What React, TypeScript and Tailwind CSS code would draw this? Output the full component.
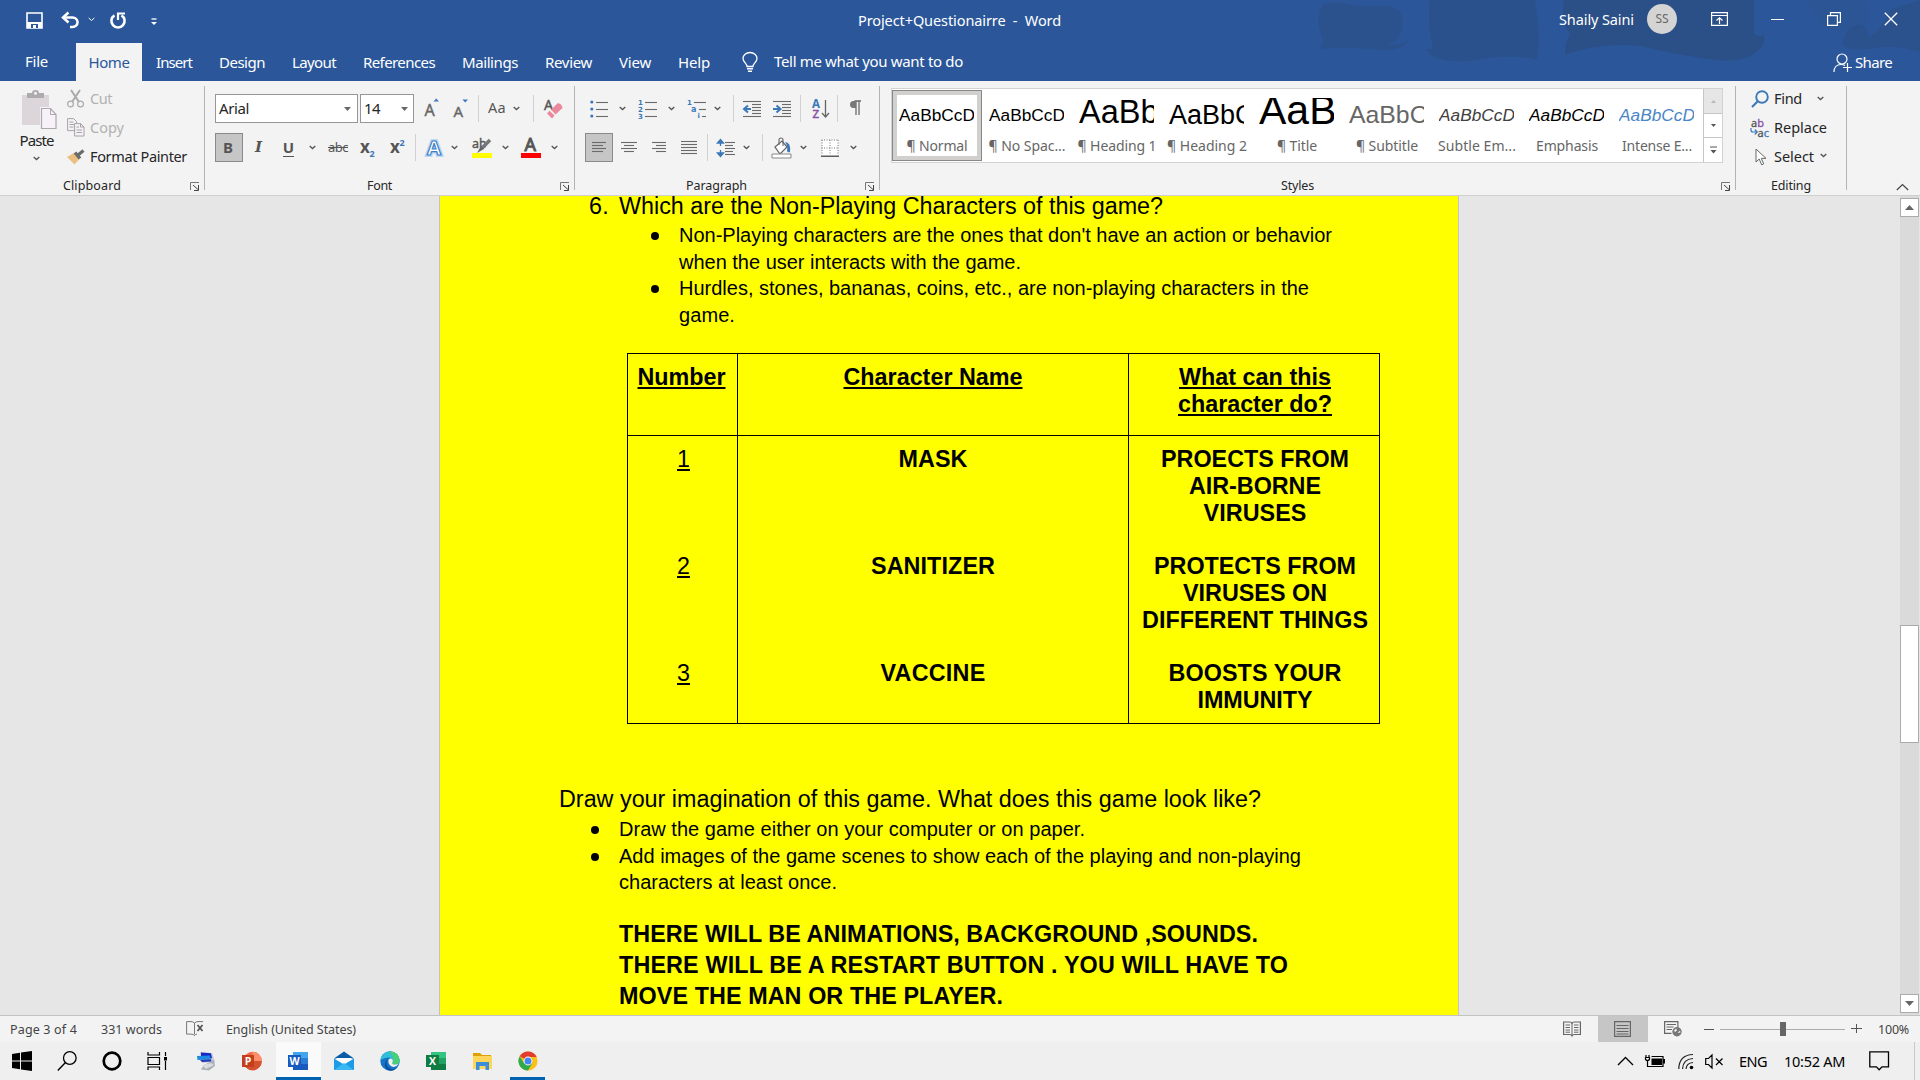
import React, { useLayoutEffect, useRef, useState } from 'react';

/* Single line of text whose tracking is adjusted so that it fills a given width. */
function T({ w, c = '', children }: { w: number; c?: string; children: string }) {
  const ref = useRef<HTMLSpanElement>(null);
  const [ls, setLs] = useState(0);
  useLayoutEffect(() => {
    if (ref.current) {
      const natural = ref.current.getBoundingClientRect().width;
      setLs((w - natural) / children.length);
    }
  }, [w, children]);
  return (
    <span className={'block shrink-0 whitespace-pre ' + c} style={{ width: w }}>
      <span ref={ref} style={{ letterSpacing: ls }}>
        {children}
      </span>
    </span>
  );
}

type SvgProps = { w: number; h: number; c?: string; children: React.ReactNode };
const S = ({ w, h, c = '', children }: SvgProps) => (
  <svg width={w} height={h} viewBox={`0 0 ${w} ${h}`} className={'block shrink-0 overflow-visible ' + c} fill="none">
    {children}
  </svg>
);

const Chev = ({ c = '' }: { c?: string }) => (
  <S w={7} h={5} c={c}>
    <path d="M.7 1l2.8 2.6L6.300 1" stroke="#555" strokeWidth="1.3" />
  </S>
);
const Tri = ({ c = '' }: { c?: string }) => (
  <S w={7} h={4} c={c}>
    <path d="M0 0h7L3.500 4z" fill="#666" />
  </S>
);
const Sep = ({ c = '' }: { c?: string }) => <div className={'h-[27px] w-px shrink-0 bg-[#d0d0d0] ' + c} />;
const GroupSep = () => <div className="mt-[5px] h-[104px] w-px shrink-0 bg-[#b3b3b3]" />;
const Launcher = ({ c = '' }: { c?: string }) => (
  <S w={10} h={9} c={c}>
    <path d="M.5 8V.5H9" stroke="#777" />
    <path d="M3 3l5 4.500M8.500 3v5.500H4" stroke="#444" />
  </S>
);

function TitleBar() {
  return (
    <div className="flex h-[43px] items-center text-[14.5px] text-white">
      <S w={17} h={17} c="ml-[26px] -mt-[3px]">
        <path d="M1 1h15v15H1z" stroke="#fff" strokeWidth="1.6" />
        <path d="M1 10h15v6H1z" fill="#fff" />
        <path d="M5 12h7v4h-2v-3H7v3H5z" fill="#2b579a" />
      </S>
      <S w={19} h={16} c="ml-[18px] -mt-[3px]">
        <path d="M2 5.500h9.500a5 4.700 0 010 9.500H9" stroke="#fff" strokeWidth="2.500" />
        <path d="M7.500.5L2 5.500l5.500 5" stroke="#fff" strokeWidth="2.500" />
      </S>
      <S w={7} h={5} c="ml-[8px] -mt-[4px]">
        <path d="M.7 1l2.800 2.500L6.300 1" stroke="#fff" />
      </S>
      <S w={18} h={17} c="ml-[14px] -mt-[3px]">
        <path d="M5.500 3.300A6.600 6.600 0 1012.500 3.300" stroke="#fff" strokeWidth="2.600" />
        <path d="M9 8V1.500h7" stroke="#fff" strokeWidth="2.200" />
      </S>
      <S w={6} h={8} c="ml-[24px]">
        <path d="M.5 1h5" stroke="#fff" strokeWidth="1.300" />
        <path d="M0 4h6L3 7z" fill="#fff" />
      </S>
      <T w={203} c="ml-[701px] -mt-[2px]">{'Project+Questionairre  -  Word'}</T>
      <T w={75} c="ml-[498px] -mt-[4px]">Shaily Saini</T>
      <div className="-mt-[5px] ml-[13px] flex size-[30px] items-center justify-center rounded-full bg-[#d4d4d4] text-[12px] text-[#666]">
        SS
      </div>
      <S w={17} h={14} c="ml-[34px] -mt-[5px]">
        <path d="M.6.6h15.800v12.800H.6zM.6 3.500h15.800" stroke="#fff" strokeWidth="1.200" />
        <path d="M8.500 12V6M5.500 8.500l3-2.700 3 2.700" stroke="#fff" strokeWidth="1.200" />
      </S>
      <div className="-mt-[4px] ml-[43px] h-px w-[13px] bg-white" />
      <S w={14} h={14} c="ml-[43px] -mt-[5px]">
        <path d="M.6 3.600h9.800v9.800H.6zM3.500 3.500V.6h9.900v9.800h-3" stroke="#fff" strokeWidth="1.200" />
      </S>
      <S w={14} h={14} c="ml-[43px] -mt-[5px]">
        <path d="M.8.800l12.400 12.400M13.200.8L.8 13.200" stroke="#fff" strokeWidth="1.300" />
      </S>
    </div>
  );
}

function TabBar() {
  return (
    <div className="flex h-[38px] items-center text-[15px] text-white">
      <T w={23} c="ml-[25px] -mt-[1px]">File</T>
      <div className="ml-[28px] flex h-full w-[66px] items-center justify-center bg-[#f3f3f3] text-[#2b579a]">
        <T w={41}>Home</T>
      </div>
      <T w={36} c="ml-[14px]">Insert</T>
      <T w={46} c="ml-[27px]">Design</T>
      <T w={44} c="ml-[27px]">Layout</T>
      <T w={72} c="ml-[27px]">References</T>
      <T w={56} c="ml-[27px]">Mailings</T>
      <T w={47} c="ml-[27px]">Review</T>
      <T w={32} c="ml-[27px]">View</T>
      <T w={32} c="ml-[27px]">Help</T>
      <S w={16} h={20} c="ml-[32px]">
        <path d="M5 14.500c0-3-4-4.300-4-8A7 6 0 0115 6.500c0 3.700-4 5-4 8z" stroke="#fff" strokeWidth="1.300" />
        <path d="M5 16.800h6M6 19.200h4" stroke="#fff" strokeWidth="1.400" />
      </S>
      <T w={189} c="ml-[16px] -mt-[1px]">Tell me what you want to do</T>
      <S w={19} h={20} c="ml-[870px] mt-[2px]">
        <circle cx="9" cy="6" r="5" stroke="#fff" strokeWidth="1.200" />
        <path d="M1 19c0-5 3-7.500 7-7.500 2 0 3 .3 4 1M14.500 10v9M10 14.500h9" stroke="#fff" strokeWidth="1.200" />
      </S>
      <T w={37} c="ml-[3px] mt-[1px]">Share</T>
    </div>
  );
}

function Header() {
  return (
    <header className="relative h-[81px] bg-[#2b579a]">
      <svg className="absolute right-0 top-0 h-[81px] w-[640px]" viewBox="0 0 640 81" fill="#2b4f85">
        <path d="M44 4q14-4 32 2h32q18 3 14 22-2 14-16 16 14 2 22-4-2 10-26 10-38-4-62-1 4-8 2-12-8-20 2-33z" opacity=".6" />
        <path d="M150 0h105q6 30 2 60-18-6-50-2-48 10-62-9l8 0q-6-26-3-49z" opacity=".75" />
        <path d="M284 0h190v34q12 6 9-4 4 10-2 18-14 15-44 12-46-6-76-14-40-4-76 9 0-14 5-20-10-16-6-35z" opacity=".9" />
        <path d="M528 0h58l4 20q-10 12-24 10-28 4-38-30z" opacity=".25" />
        <path d="M563 44q0-14 14-19 10-2 12 12 12-6 22-28l29-9v52q-30-8-42-4-34 4-35-4z" opacity=".6" />
      </svg>
      <div className="relative">
        <TitleBar />
        <TabBar />
      </div>
    </header>
  );
}

function Clipboard() {
  return (
    <div className="flex w-[204px] shrink-0 flex-col">
      <div className="flex h-[96px]">
        <div className="flex w-[56px] flex-col items-center pl-[17px]">
          <S w={35} h={39} c="ml-[5px] mt-[9px]">
            <path d="M0 5h27v30H0z" fill="#dcd6da" />
            <path d="M5 3h5a3.500 3 0 017 0h5v5H5z" fill="#aeabae" />
            <circle cx="13.500" cy="3.300" r="1.500" fill="#f3f3f3" />
            <path d="M18 17h17v22H18z" fill="#f3f3f3" />
            <path d="M19.500 18.500h9l5.500 6v14H19.500z" fill="#f6f2f8" stroke="#aea6b0" strokeWidth="1.200" />
            <path d="M28.500 18.500v6H34" stroke="#aea6b0" />
          </S>
          <T w={34} c="text-[15px] leading-[22px] text-[#262626]">Paste</T>
          <Chev c="mt-[5px]" />
        </div>
        <div className="ml-[11px] flex flex-col pt-[3px] text-[14.5px] text-[#b1b1b1]">
          <div className="flex h-[29px] items-center">
            <S w={17} h={19}>
              <path d="M4 1l8 12M13 1L5 13" stroke="#aaa" strokeWidth="2" />
              <circle cx="3.500" cy="15" r="2.900" stroke="#aaa" strokeWidth="1.200" />
              <circle cx="13.500" cy="15" r="2.900" stroke="#aaa" strokeWidth="1.200" />
            </S>
            <T w={22} c="ml-[6px]">Cut</T>
          </div>
          <div className="flex h-[29px] items-center">
            <S w={18} h={19}>
              <path d="M.6.6h6l3 3v9H.6z" stroke="#aaa0aa" />
              <path d="M2.500 4h4M2.500 6.500h5M2.500 9h4" stroke="#aaa0aa" />
              <path d="M7.600 5.600h6l3.400 3.400v9H7.600z" fill="#f3f3f3" stroke="#aaa0aa" />
              <path d="M13.500 5.600V9H17M9.500 9h2.500M9.500 12h5.500M9.500 14.500h5.500" stroke="#aaa0aa" />
            </S>
            <T w={34} c="ml-[5px]">Copy</T>
          </div>
          <div className="flex h-[29px] items-center text-[#262626]">
            <S w={18} h={16}>
              <path d="M0 8l7-4 5.500 6L7.500 15.500z" fill="#eabf7f" />
              <path d="M8 3.500l5 6" stroke="#6b6b6b" strokeWidth="3.500" />
              <path d="M11 6l5.500-4.500" stroke="#6b6b6b" strokeWidth="3.200" />
            </S>
            <T w={97} c="ml-[5px]">Format Painter</T>
          </div>
        </div>
      </div>
      <div className="mt-px flex h-[17px] items-center text-[12.500px] text-[#262626]">
        <T w={58} c="ml-[63px]">Clipboard</T>
        <Launcher c="ml-[69px] -mt-px" />
      </div>
    </div>
  );
}

function FontGroup() {
  return (
    <div className="flex w-[369px] shrink-0 flex-col pt-[13px]">
      <div className="flex h-[29px] items-center">
        <div className="ml-[10px] flex h-[29px] w-[143px] items-center border border-[#969696] bg-white pl-[3px] text-[15px] text-[#262626]">
          <T w={30}>Arial</T>
          <Tri c="ml-[95px]" />
        </div>
        <div className="ml-[2px] flex h-[29px] w-[54px] items-center border border-[#969696] bg-white pl-[3px] text-[15px] text-[#262626]">
          <T w={16}>14</T>
          <Tri c="ml-[21px]" />
        </div>
        <S w={15} h={18} c="ml-[11px] -mt-[4px]">
          <text x="-.5" y="17.500" fontSize="16" fontFamily="Noto Sans" fill="#666" stroke="#666" strokeWidth=".4">A</text>
          <path d="M8.500 3.500h5.500L11.200.5z" fill="#3b78b8" />
        </S>
        <S w={15} h={18} c="ml-[14px] -mt-[2px]">
          <text x="-.5" y="17.500" fontSize="15" fontFamily="Noto Sans" fill="#666" stroke="#666" strokeWidth=".4">A</text>
          <path d="M8.500.5h5.500l-2.800 3z" fill="#3b78b8" />
        </S>
        <Sep c="ml-[9px]" />
        <T w={18} c="ml-[9px] -mt-[2px] text-[14.5px] text-[#555]">Aa</T>
        <Chev c="ml-[7px]" />
        <Sep c="ml-[13px]" />
        <S w={19} h={20} c="ml-[10px]">
          <text x="0" y="11" fontSize="14" fontFamily="Noto Sans" fill="#555" stroke="#555" strokeWidth=".4">A</text>
          <path d="M7 10.500l7-6.500q4 1 4.500 5l-7 6.500z" fill="#e9899b" />
          <path d="M5.500 11.800l5 4.800-2.500 2.900-5-5z" fill="#e9899b" />
        </S>
      </div>
      <div className="mt-[10px] flex h-[29px] items-center">
        <div className="ml-[10px] flex h-[29px] w-[28px] items-center justify-center border border-[#8a8a8a] bg-[#c6c6c6] pr-[2px] text-[15px] font-bold text-[#555]">
          B
        </div>
        <div className="ml-[12px] w-[11px] font-['DejaVu_Serif','Liberation_Serif',serif] text-[15px] font-bold italic leading-none text-[#555]">I</div>
        <div className="ml-[17px] flex h-[18px] w-[11px] justify-center border-b border-[#555] text-[15px] font-bold leading-[17px] text-[#555]">U</div>
        <Chev c="ml-[15px]" />
        <T w={20} c="ml-[12px] text-[13px] text-[#555] line-through">abc</T>
        <S w={18} h={20} c="ml-[12px]">
          <text x="0" y="14.500" fontSize="17" fontWeight="700" fontFamily="Noto Sans" fill="#555">x</text>
          <text x="9.500" y="18.500" fontSize="9" fontWeight="700" fontFamily="Noto Sans" fill="#3b78b8">2</text>
        </S>
        <S w={18} h={20} c="ml-[12px]">
          <text x="0" y="15" fontSize="17" fontWeight="700" fontFamily="Noto Sans" fill="#555">x</text>
          <text x="9.500" y="8" fontSize="9" fontWeight="700" fontFamily="Noto Sans" fill="#3b78b8">2</text>
        </S>
        <Sep c="ml-[7px]" />
        <S w={20} h={22} c="ml-[8px]">
          <text x="3" y="18" fontSize="20" fontWeight="700" fontFamily="Noto Sans" fill="none" stroke="#bcd8f5" strokeWidth="4" textLength="14" lengthAdjust="spacingAndGlyphs">A</text>
          <text x="3" y="18" fontSize="20" fontWeight="700" fontFamily="Noto Sans" fill="#fff" stroke="#3f7fc6" strokeWidth="1.200" textLength="14" lengthAdjust="spacingAndGlyphs">A</text>
        </S>
        <Chev c="ml-[7px]" />
        <S w={20} h={22} c="ml-[14px]">
          <text x="0" y="11" fontSize="12.500" fontFamily="Noto Sans" fill="#555" stroke="#555" strokeWidth=".4">ab</text>
          <path d="M18 3l-8 8" stroke="#777" strokeWidth="3.500" />
          <path d="M9 9l3 3-7 4z" fill="#666" />
          <path d="M0 16h20v5H0z" fill="#ff0" />
        </S>
        <Chev c="ml-[10px]" />
        <S w={20} h={22} c="ml-[12px]">
          <text x="3.500" y="13.500" fontSize="18" fontFamily="Noto Sans" fill="#555" stroke="#555" strokeWidth=".9" textLength="12.500">A</text>
          <path d="M0 16h20v5H0z" fill="#f00" />
        </S>
        <Chev c="ml-[10px]" />
      </div>
      <div className="mt-[16px] flex h-[17px] items-center text-[12.500px] text-[#262626]">
        <T w={25} c="ml-[162px]">Font</T>
        <Launcher c="ml-[168px] -mt-px" />
      </div>
    </div>
  );
}

function lines(ys: number[], xs: [number, number][]) {
  return ys.map((y, i) => <path key={y} d={`M${xs[i % xs.length][0]} ${y}h${xs[i % xs.length][1]}`} stroke="#6a6a6a" strokeWidth="1.100" />);
}

function ParagraphGroup() {
  return (
    <div className="flex w-[304px] shrink-0 flex-col pt-[13px]">
      <div className="flex h-[29px] items-center">
        <S w={19} h={18} c="ml-[15px]">
          <circle cx="1.800" cy="2" r="1.600" fill="#3b78b8" />
          <circle cx="1.800" cy="9" r="1.600" fill="#3b78b8" />
          <circle cx="1.800" cy="16" r="1.600" fill="#3b78b8" />
          {lines([2.5, 9.5, 16.5], [[6, 12]])}
        </S>
        <Chev c="ml-[10px]" />
        <S w={20} h={20} c="ml-[12px]">
          {['1', '2', '3'].map((n, i) => (
            <text key={n} x="0" y={6 + i * 7} fontSize="7" fontWeight="700" fontFamily="DejaVu Sans" fill="#3b78b8">{n}</text>
          ))}
          {lines([3.5, 10.5, 17.5], [[7, 12]])}
        </S>
        <Chev c="ml-[10px]" />
        <S w={20} h={20} c="ml-[12px]">
          <text x="0" y="6" fontSize="7" fontWeight="700" fontFamily="DejaVu Sans" fill="#3b78b8">1</text>
          <text x="4" y="13" fontSize="8" fontWeight="700" fontFamily="DejaVu Sans" fill="#3b78b8">a</text>
          <text x="10.500" y="19" fontSize="7" fontWeight="700" fontFamily="DejaVu Sans" fill="#3b78b8">i</text>
          {lines([3.5, 10.5, 17.5], [[7, 12], [12, 7], [15, 4]])}
        </S>
        <Chev c="ml-[7px]" />
        <Sep c="ml-[12px]" />
        <S w={18} h={18} c="ml-[9px]">
          {lines([1.5, 4.5, 7.5, 10.5, 13.5, 16.5], [[0, 18], [9, 9], [9, 9], [9, 9], [9, 9], [0, 18]])}
          <path d="M8 9H2M5 5.500L1 9l4 3.500" stroke="#3b78b8" strokeWidth="2" />
        </S>
        <S w={18} h={18} c="ml-[12px]">
          {lines([1.5, 4.5, 7.5, 10.5, 13.5, 16.5], [[0, 18], [9, 9], [9, 9], [9, 9], [9, 9], [0, 18]])}
          <path d="M0 9h6M3.500 5.500l4 3.500-4 3.500" stroke="#3b78b8" strokeWidth="2" />
        </S>
        <Sep c="ml-[9px]" />
        <S w={18} h={20} c="ml-[11px]">
          <text x="0" y="8.500" fontSize="11.500" fontWeight="700" fontFamily="Noto Sans" fill="#3b78b8">A</text>
          <text x=".5" y="19" fontSize="11.500" fontWeight="500" fontFamily="Noto Sans" fill="#8a4fa8" stroke="#8a4fa8" strokeWidth=".4">Z</text>
          <path d="M13.500 1v16M10 14l3.500 4 3.500-4" stroke="#666" strokeWidth="1.300" />
        </S>
        <Sep c="ml-[7px]" />
        <S w={13} h={16} c="ml-[11px] -mt-[2px]">
          <path d="M5.500 1H12M7 1v14M10 1v14" stroke="#6a6a6a" strokeWidth="1.300" />
          <path d="M7 1H4.500a3.500 3.500 0 000 7H7z" fill="#777" />
        </S>
      </div>
      <div className="mt-[10px] flex h-[29px] items-center">
        <div className="ml-[10px] flex h-[29px] w-[28px] items-center justify-center border border-[#8a8a8a] bg-[#c6c6c6]">
          <S w={14} h={13}>{lines([1.5, 4.5, 7.5, 10.5], [[0, 14], [0, 11]])}</S>
        </div>
        <S w={16} h={13} c="ml-[8px]">{lines([1.5, 4.5, 7.5, 10.5], [[0, 16], [3, 10]])}</S>
        <S w={14} h={13} c="ml-[15px]">{lines([1.5, 4.5, 7.5, 10.5], [[0, 14], [4, 10]])}</S>
        <S w={16} h={15} c="ml-[15px]">{lines([1.5, 4.5, 7.5, 10.5, 13.5], [[0, 16]])}</S>
        <Sep c="ml-[10px]" />
        <S w={18} h={20} c="ml-[9px]">
          <path d="M3.500 2v6M.5 5l3-3.500 3 3.500zM3.500 12v6M.5 15l3 3.500 3-3.500z" fill="#3b78b8" stroke="#3b78b8" strokeWidth="1.300" />
          {lines([4.5, 7.5, 10.5, 13.5, 16.5], [[8, 10], [8, 8]])}
        </S>
        <Chev c="ml-[8px]" />
        <Sep c="ml-[12px]" />
        <S w={21} h={22} c="ml-[8px]">
          <path d="M4 10l7-6 5 6-7 7z" fill="#fff" stroke="#666" strokeWidth="1.200" />
          <path d="M8 8V3a2 2 0 014 0v6" stroke="#666" strokeWidth="1.100" />
          <path d="M14 5q6 0 5 10-2 1-3-1 1-5-2-9z" fill="#3b78b8" />
          <path d="M1 17h19v4H1z" fill="#fff" stroke="#888" />
        </S>
        <Chev c="ml-[8px]" />
        <S w={18} h={18} c="ml-[14px]">
          <path d="M1 1h16v16H1z" fill="#fff" />
          <path d="M.5 1h17M.5 9h17M1 1v15M9 1v15M17 1v15" stroke="#777" strokeDasharray="1 1.500" />
          <path d="M0 17.200h18" stroke="#444" strokeWidth="1.300" />
        </S>
        <Chev c="ml-[11px]" />
      </div>
      <div className="mt-[16px] flex h-[17px] items-center text-[12.500px] text-[#262626]">
        <T w={61} c="ml-[111px]">Paragraph</T>
        <Launcher c="ml-[118px] -mt-px" />
      </div>
    </div>
  );
}

const styles = [
  { s: 'AaBbCcD', n: '¶ Normal', w: 61, c: 'text-[17.300px] pt-px text-black' },
  { s: 'AaBbCcD', n: '¶ No Spac...', w: 77, c: 'text-[17.300px] pt-px text-black' },
  { s: 'AaBb', n: '¶ Heading 1', w: 79, c: 'text-[32.500px] -mt-[2px] text-black' },
  { s: 'AaBbC', n: '¶ Heading 2', w: 80, c: 'text-[27px] pt-px text-black' },
  { s: 'AaB', n: '¶ Title', w: 40, c: 'text-[41px] -mt-[4px] text-black' },
  { s: 'AaBbC', n: '¶ Subtitle', w: 62, c: 'text-[24.800px] pt-px text-[#666]' },
  { s: 'AaBbCcD', n: 'Subtle Em...', w: 78, c: 'text-[17.300px] pt-px italic text-[#404040]' },
  { s: 'AaBbCcD', n: 'Emphasis', w: 62, c: 'text-[17.300px] pt-px italic text-black' },
  { s: 'AaBbCcD', n: 'Intense E...', w: 70, c: 'text-[17.300px] pt-px italic text-[#4a86c8]' },
];

function StylesGroup() {
  return (
    <div className="flex w-[855px] shrink-0 flex-col pt-[7px]">
      <div className="ml-[11px] flex h-[75px] w-[832px] border border-[#d2d2d2] bg-white">
        {styles.map((s, i) => (
          <div
            key={s.n}
            className={
              i === 0
                ? 'my-px h-[71px] w-[90px] shrink-0 border border-[#8a8886] bg-white shadow-[inset_0_0_0_4px_#d2d0ce]'
                : 'my-px h-[71px] w-[90px] shrink-0 border border-transparent'
            }
          >
            <div className="ml-[6px] mt-[7px] h-[34px] w-[75px] overflow-hidden">
              <div className={"whitespace-nowrap font-['Liberation_Sans',sans-serif] leading-[32px] " + s.c}>{s.s}</div>
            </div>
            <div className="mt-[4px] flex justify-center text-[14px] leading-[20px] text-[#666]">
              <T w={s.w}>{s.n}</T>
            </div>
          </div>
        ))}
        <div className="ml-px flex w-[19px] flex-col border-l border-[#c6c6c6]">
          <div className="flex h-[25px] items-center justify-center border-b border-[#c6c6c6] bg-[#e6e6e6]">
            <S w={5} h={3}><path d="M0 3h5L2.500 0z" fill="#b8b8b8" /></S>
          </div>
          <div className="flex h-[24px] items-center justify-center border-b border-[#c6c6c6]">
            <S w={5} h={3}><path d="M0 0h5L2.500 3z" fill="#555" /></S>
          </div>
          <div className="flex h-[24px] items-center justify-center">
            <S w={7} h={8}><path d="M0 1h7" stroke="#555" /><path d="M.5 4h6l-3 3.500z" fill="#555" /></S>
          </div>
        </div>
      </div>
      <div className="mt-[15px] flex h-[17px] items-center text-[12.500px] text-[#262626]">
        <T w={33} c="ml-[401px]">Styles</T>
        <Launcher c="ml-[407px] -mt-px" />
      </div>
    </div>
  );
}

function EditingGroup() {
  return (
    <div className="flex w-[110px] shrink-0 flex-col pt-[3px] text-[14.5px] text-[#262626]">
      <div className="flex h-[29px] items-center">
        <S w={18} h={18} c="ml-[15px]">
          <circle cx="11" cy="7" r="5.800" stroke="#3b78b8" strokeWidth="1.900" />
          <path d="M7 11L1 17" stroke="#3b78b8" strokeWidth="2.200" />
        </S>
        <T w={28} c="ml-[5px]">Find</T>
        <Chev c="ml-[15px]" />
      </div>
      <div className="flex h-[29px] items-center">
        <S w={20} h={20} c="ml-[14px]">
          <text x="1" y="8.500" fontSize="11" fontFamily="Noto Sans" fill="#555" stroke="#555" strokeWidth=".3">a<tspan fill="#8a4fa8" stroke="#8a4fa8">b</tspan></text>
          <text x="7.500" y="18.500" fontSize="11" fontFamily="Noto Sans" fill="#555" stroke="#555" strokeWidth=".3">a<tspan fill="#3b78b8" stroke="#3b78b8">c</tspan></text>
          <path d="M1 10v2q0 2 2 2h4M4.800 11.500L7.300 14l-2.500 2.500" stroke="#3b78b8" strokeWidth="1.200" />
        </S>
        <T w={53} c="ml-[4px]">Replace</T>
      </div>
      <div className="flex h-[29px] items-center">
        <S w={12} h={18} c="ml-[19px]">
          <path d="M1 1v13l3.200-3 2.500 5.800 2-.9-2.400-5.500H11z" fill="#fff" stroke="#666" />
        </S>
        <T w={40} c="ml-[7px]">Select</T>
        <Chev c="ml-[6px] -mt-[2px]" />
      </div>
      <div className="mt-[7px] flex h-[17px] items-center text-[12.500px]">
        <T w={40} c="ml-[35px]">Editing</T>
      </div>
    </div>
  );
}

function Ribbon() {
  return (
    <div className="flex h-[115px] border-b border-[#cfcfcf] bg-[#f3f3f3]">
      <Clipboard />
      <GroupSep />
      <FontGroup />
      <GroupSep />
      <ParagraphGroup />
      <GroupSep />
      <StylesGroup />
      <GroupSep />
      <EditingGroup />
      <GroupSep />
      <S w={13} h={8} c="ml-[49px] mt-[102px]">
        <path d="M.8 7l5.700-5.500L12.200 7" stroke="#444" strokeWidth="1.200" />
      </S>
    </div>
  );
}

const Bullet = () => <span className="mr-[20px] mt-[10px] size-[8px] shrink-0 rounded-full bg-black" />;
const Blank = () => <div className="h-[26.75px]" />;

function DocPage() {
  return (
    <div className="h-full w-[1020px] overflow-hidden border-x border-[#c3c3c3] bg-[#ffff00] font-['Liberation_Sans',Arial,sans-serif] text-[20px] leading-[26.6px] text-black">
      <div className="-mt-[3px] ml-[149px] flex text-[23.330px] leading-[27px]">
        <T w={20}>6.</T>
        <T w={544} c="ml-[10px]">Which are the Non-Playing Characters of this game?</T>
      </div>
      <div className="ml-[211px] mt-[2px] h-[131px]">
        <div className="flex">
          <Bullet />
          <div>
            <T w={653}>Non-Playing characters are the ones that don't have an action or behavior</T>
            <T w={342}>when the user interacts with the game.</T>
          </div>
        </div>
        <div className="flex">
          <Bullet />
          <div>
            <T w={630}>Hurdles, stones, bananas, coins, etc., are non-playing characters in the</T>
            <T w={56}>game.</T>
          </div>
        </div>
      </div>
      <div className="ml-[187px] w-[753px] border border-black text-center text-[23.330px] font-bold leading-[26.750px]">
        <div className="grid h-[82px] grid-cols-[110px_391px_250px] border-b border-black underline decoration-2 underline-offset-[2px]">
          <div className="flex justify-center border-r border-black pr-[2px] pt-[10px]"><T w={88}>Number</T></div>
          <div className="flex justify-center border-r border-black pt-[10px]"><T w={179}>Character Name</T></div>
          <div className="flex flex-col items-center pl-[2px] pt-[10px]">
            <T w={152}>What can this</T>
            <T w={154}>character do?</T>
          </div>
        </div>
        <div className="grid h-[287px] grid-cols-[110px_391px_250px]">
          <div className="border-r border-black pl-[2px] pt-[10px] font-normal underline decoration-2 underline-offset-[2px]">
            <div>1</div><Blank /><Blank /><Blank />
            <div>2</div><Blank /><Blank /><Blank />
            <div>3</div>
          </div>
          <div className="flex flex-col items-center border-r border-black pt-[10px]">
            <T w={69}>MASK</T><Blank /><Blank /><Blank />
            <T w={124}>SANITIZER</T><Blank /><Blank /><Blank />
            <T w={105}>VACCINE</T>
          </div>
          <div className="flex flex-col items-center pl-[2px] pt-[10px]">
            <T w={188}>PROECTS FROM</T>
            <T w={132}>AIR-BORNE</T>
            <T w={103}>VIRUSES</T>
            <Blank />
            <T w={202}>PROTECTS FROM</T>
            <T w={144}>VIRUSES ON</T>
            <T w={226}>DIFFERENT THINGS</T>
            <Blank />
            <T w={173}>BOOSTS YOUR</T>
            <T w={115}>IMMUNITY</T>
          </div>
        </div>
      </div>
      <T w={702} c="ml-[119px] mt-[62px] text-[23.330px] leading-[27px]">Draw your imagination of this game. What does this game look like?</T>
      <div className="ml-[151px] mt-[3px]">
        <div className="flex">
          <Bullet />
          <T w={466}>Draw the game either on your computer or on paper.</T>
        </div>
        <div className="flex">
          <Bullet />
          <div>
            <T w={682}>Add images of the game scenes to show each of the playing and non-playing</T>
            <T w={218}>characters at least once.</T>
          </div>
        </div>
      </div>
      <div className="ml-[179px] mt-[23px] text-[23.330px] font-bold leading-[31px]">
        <T w={639}>THERE WILL BE ANIMATIONS, BACKGROUND ,SOUNDS.</T>
        <T w={669}>THERE WILL BE A RESTART BUTTON . YOU WILL HAVE TO</T>
        <T w={384}>MOVE THE MAN OR THE PLAYER.</T>
      </div>
    </div>
  );
}

function Workspace() {
  return (
    <main className="flex h-[819px] bg-[#e6e6e6]">
      <div className="w-[439px] shrink-0" />
      <DocPage />
      <div className="ml-auto mr-px flex w-[19px] flex-col bg-[#dadada] pb-[2px] pt-[2px]">
        <div className="flex h-[19px] items-center justify-center border border-[#ababab] bg-white">
          <S w={9} h={5}><path d="M0 5h9L4.500 0z" fill="#666" /></S>
        </div>
        <div className="mt-[408px] h-[118px] border border-[#ababab] bg-white" />
        <div className="mt-auto flex h-[19px] items-center justify-center border border-[#ababab] bg-white">
          <S w={9} h={5}><path d="M0 0h9L4.500 5z" fill="#666" /></S>
        </div>
      </div>
    </main>
  );
}

function StatusBar() {
  return (
    <div className="flex h-[27px] items-center border-t border-[#c3c3c3] bg-[#f3f3f3] text-[12.500px] text-[#444]">
      <T w={67} c="ml-[10px] mt-[2px]">Page 3 of 4</T>
      <T w={61} c="ml-[24px] mt-[2px]">331 words</T>
      <S w={18} h={15} c="ml-[24px] -mt-px">
        <path d="M8.500 13.500V2Q7 .6 5 .6H.6v12.500H5q2.500 0 3.500 1.500 1-1.500 2.500-1.500M8.500 2Q10 .6 12 .6h5" stroke="#777" />
        <path d="M11.500 4l5 6M16.500 4l-5 6" stroke="#555" strokeWidth="1.800" />
      </S>
      <T w={130} c="ml-[22px] mt-[2px]">English (United States)</T>
      <S w={18} h={16} c="ml-[1207px] -mt-px">
        <path d="M.6 1h6Q8.500 1 9 2.200 9.500 1 11.400 1h6v12.500h-6q-1.900 0-2.400 1.200-.5-1.200-2.400-1.200h-6z" stroke="#666" strokeWidth="1.200" />
        <path d="M9 2v13M2.500 4h4.500M2.500 6.500h4.500M2.500 9h4.500M2.500 11.200h4.500M11 4h4.500M11 6.500h4.500M11 9h4.500M11 11.200h4.500" stroke="#666" />
      </S>
      <div className="ml-[17px] flex h-full w-[50px] items-center justify-center bg-[#c6c6c6]">
        <S w={17} h={16} c="-ml-px">
          <path d="M.6.6h15.800v14.800H.6z" stroke="#666" strokeWidth="1.200" />
          <path d="M2.500 4.500h12M2.500 7.500h12M2.500 10.500h12M2.500 13h12" stroke="#666" />
        </S>
      </div>
      <S w={18} h={16} c="ml-[16px]">
        <path d="M7.500 12.400H.6V.6h13.300v6" stroke="#666" strokeWidth="1.200" />
        <path d="M2.500 3.500h9.500M2.500 6h7M2.500 8.500h5.500" stroke="#666" />
        <circle cx="13" cy="10.800" r="4.700" fill="#777" />
        <path d="M10 9.500l2-2 1 2-2 1.500zM13.500 12l2.500-2.500.5 2z" fill="#f3f3f3" />
      </S>
      <div className="ml-[22px] h-px w-[10px] bg-[#555]" />
      <div className="ml-[6px] flex h-[14px] w-[125px] items-center">
        <div className="h-px w-[60px] bg-[#ababab]" />
        <div className="h-[14px] w-[6px] bg-[#666]" />
        <div className="h-px w-[59px] bg-[#ababab]" />
      </div>
      <S w={11} h={11} c="ml-[6px] -mt-px"><path d="M0 5.500h11M5.500 1v9" stroke="#555" /></S>
      <T w={31} c="ml-[16px] mt-[2px]">100%</T>
    </div>
  );
}

const Office = ({ letter, dark, mid, light, c = '' }: { letter: string; dark: string; mid: string; light: string; c?: string }) => (
  <S w={20} h={20} c={c}>
    <path d="M5 1h15v6H5z" fill={light} />
    <path d="M5 7h15v6H5z" fill={mid} />
    <path d="M5 13h15v6H5z" fill={dark} />
    <path d="M0 4h13v12H0z" fill={dark} />
    <text x="6.500" y="14" fontSize="10.500" fontWeight="700" textAnchor="middle" fontFamily="Open Sans" fill="#fff">{letter}</text>
  </S>
);

function Taskbar() {
  return (
    <footer className="flex h-[38px] items-center bg-[#efefef] text-[14.500px] text-black">
      <S w={20} h={20} c="ml-[12px]">
        <path d="M0 3l8-1.200v7.700H0zM9 1.600L20 0v9.500H9zM0 10.500h8v7.700L0 17zM9 10.500h11V20L9 18.400z" fill="#000" />
      </S>
      <S w={20} h={20} c="ml-[25px]">
        <circle cx="12.800" cy="7" r="6.300" stroke="#000" strokeWidth="1.300" />
        <path d="M8.500 11.500L.8 19.500" stroke="#000" strokeWidth="1.400" />
      </S>
      <S w={20} h={20} c="ml-[25px]"><circle cx="10" cy="10" r="8.300" stroke="#000" strokeWidth="2.700" /></S>
      <S w={21} h={20} c="ml-[25px]">
        <path d="M1 1v3h11.500V1M1 19v-3h11.500v3M1 6.500h11.500v7H1zM18.500 1v4M18.500 10v9" stroke="#000" strokeWidth="1.200" />
        <path d="M17 6h3v3.500h-3z" fill="#000" />
      </S>
      <S w={20} h={20} c="ml-[28px]">
        <path d="M4 1l12 1 3 9-13 1z" fill="#c4ccd6" />
        <path d="M5 1.500l10 .7 1 5-11 .5z" fill="#1b27c9" />
        <path d="M1 5l13-.5.5 4L1.500 9z" fill="#1d8be0" />
        <path d="M4 9l11-.8.6 2.300L6 11z" fill="#2536b8" />
        <path d="M8 14l10-5 1 6-6 4.500-8-1z" fill="#a9b0b8" />
        <path d="M6 14l9-2 3 2-8 4z" fill="#d9dde2" />
      </S>
      <S w={20} h={20} c="ml-[26px]">
        <circle cx="10.500" cy="10" r="9.300" fill="#ed6c47" />
        <path d="M10.500.7a9.300 9.300 0 019.300 9.300h-9.300z" fill="#ff8f6b" />
        <path d="M1.200 10h18.600a9.300 9.300 0 01-18.600 0z" fill="#d35230" />
        <path d="M0 4h12v12H0z" fill="#c43e1c" />
        <text x="6" y="14" fontSize="10.500" fontWeight="700" textAnchor="middle" fontFamily="Open Sans" fill="#fff">P</text>
      </S>
      <div className="ml-[14px] flex h-full w-[45px] items-center justify-center border-b-[3px] border-[#0063b1] bg-[#fafafa] pr-px pt-[3px]">
        <Office letter="W" dark="#185abd" mid="#2b7cd3" light="#41a5ee" />
      </div>
      <S w={20} h={20} c="ml-[13px]">
        <path d="M0 7.500L10 .5l10 7z" fill="#0a5ba8" />
        <path d="M2.500 7h15v7h-15z" fill="#fff" />
        <path d="M0 7.500l10 6 10-6V19H0z" fill="#1c9be6" />
        <path d="M0 19l10-7 10 7z" fill="#39b8f2" />
      </S>
      <S w={20} h={20} c="ml-[26px]">
        <circle cx="10" cy="10" r="9.700" fill="#1374c8" />
        <path d="M.4 9A9.700 9.700 0 0119.700 9.500q0 4-4.500 4-3 0-3-1.500 1-1 .6-2.500-1-3-4.800-3T.4 9z" fill="#2fc0d8" />
        <path d="M9 .4Q19 0 19.700 9.500q0 4-4.500 4-3 0-3-1.500 3-5-3-11.600z" fill="#4fd168" opacity=".85" />
        <path d="M8 8q-3 4 0 8 4 4.500 10-.5-3 5-9 4Q4 18 5 12q1-3 3-4z" fill="#0c4f9e" />
        <path d="M8.500 8.500Q11 6.500 12.800 9q.4 1.500-.6 3 0 1.500 3 1.500l3.500-.5q-3 4-7 2.500-4-2-3.200-7z" fill="#efefef" />
      </S>
      <Office letter="X" dark="#107c41" mid="#21a366" light="#33c481" c="ml-[26px]" />
      <S w={20} h={20} c="ml-[26px]">
        <path d="M1 2h7l2 2h9v4H1z" fill="#e0a100" />
        <path d="M1 5h19v13H1z" fill="#ffd65c" />
        <path d="M4 19v-8h13v8h-3.500v-4h-6v4z" fill="#3a8fd9" />
      </S>
      <div className="ml-[18px] flex h-full w-[35px] items-center justify-center border-b-[3px] border-[#0063b1] pt-[3px]">
        <S w={20} h={20}>
          <circle cx="10" cy="10" r="9.600" fill="#fbc116" />
          <path d="M10 10L1.700 5.200A9.600 9.600 0 0118.300 5.200L18.600 6H10z" fill="#e33b2e" />
          <path d="M1.700 5.200A9.600 9.600 0 0010 19.600l4-7-4-2.600-4 2z" fill="#2da94f" />
          <circle cx="10" cy="10" r="4.400" fill="#fff" />
          <circle cx="10" cy="10" r="3.500" fill="#4285f4" />
        </S>
      </div>
      <S w={17} h={10} c="ml-[1072px]"><path d="M1 9l7.500-7.500L16 9" stroke="#000" strokeWidth="1.300" /></S>
      <S w={20} h={14} c="ml-[11px]">
        <path d="M1 1v2M4 1v2M.5 3.500h4v2q-2 2-4 0zM2.500 7v5.500H6" stroke="#000" strokeWidth="1.200" />
        <path d="M6.500 2.500H18v10H6" stroke="#000" strokeWidth="1.200" />
        <path d="M6.500 4.500H17v6.500H6.500zM18 5h2v4.500h-2z" fill="#000" />
      </S>
      <S w={16} h={17} c="ml-[13px]">
        <path d="M.8 16Q1 2 15 1.500M4.500 16Q5 6 15 5.500M8 16q.5-6 7-6.500" stroke="#222" strokeWidth="1.200" />
        <circle cx="13.500" cy="14.500" r="1.800" fill="#000" />
      </S>
      <S w={19} h={15} c="ml-[11px]">
        <path d="M.7 4.500h2.800L7 1v13L3.500 10.500H.7zM11 4.500l6.500 6.500M17.500 4.500L11 11" stroke="#000" strokeWidth="1.200" />
      </S>
      <T w={28} c="ml-[15px] mt-px">ENG</T>
      <T w={61} c="ml-[17px] mt-px">10:52 AM</T>
      <S w={21} h={20} c="ml-[24px]">
        <path d="M.8.800h18.700v15H13l-2.800 3-2.800-3H.8z" stroke="#000" strokeWidth="1.300" />
      </S>
      <div className="ml-[24px] h-full w-px bg-[#c8c8c8]" />
    </footer>
  );
}

export default function App() {
  return (
    <div className="flex h-[1080px] w-[1920px] flex-col overflow-hidden bg-[#e6e6e6] font-['Noto_Sans','Open_Sans',sans-serif]">
      <Header />
      <Ribbon />
      <Workspace />
      <StatusBar />
      <Taskbar />
    </div>
  );
}
